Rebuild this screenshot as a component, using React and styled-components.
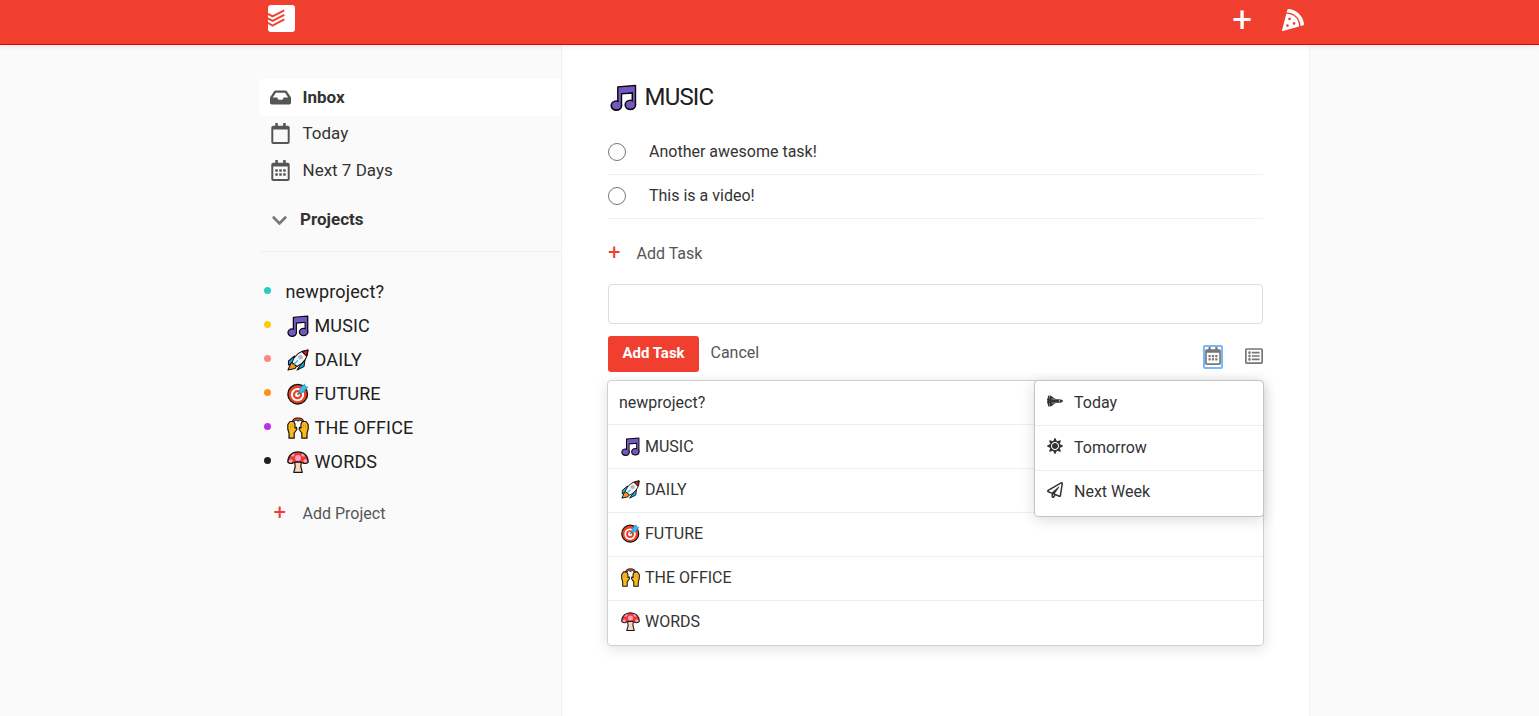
import React from 'react';
import styled, { createGlobalStyle, css } from 'styled-components';
import {
  FaPizzaSlice,
  FaInbox,
  FaRegCalendar,
  FaRegCalendarAlt,
  FaChevronDown,
  FaRegListAlt,
  FaSpaceShuttle,
  FaSun,
  FaRegPaperPlane,
} from 'react-icons/fa';

const GlobalStyle = createGlobalStyle`
  *, *::before, *::after { box-sizing: border-box; }
  body {
    margin: 0;
    background: #fafafa;
    color: #333;
    font-family: Roboto, "Liberation Sans", sans-serif;
    font-size: 16px;
    overflow: hidden;
  }
  ul { list-style: none; margin: 0; padding: 0; }
  button { font: inherit; border: 0; background: none; padding: 0; cursor: pointer; }
`;

const Header = styled.header`
  position: relative;
  height: 45px;
  background: #f03f2f;
  border-bottom: 1px solid #e60000;
  box-shadow: 0 2px 5px rgba(0, 0, 0, 0.07);
  z-index: 1;
`;

const HeaderInner = styled.nav`
  display: flex;
  justify-content: space-between;
  width: 1051px;
  height: 44px;
  margin-left: 259px;
  padding: 5px 6px 0 9px;
`;

const HeaderActions = styled.div`
  display: flex;
  align-items: center;
  height: 30px;
  gap: 30px;
  color: #fff;
`;

const Columns = styled.div`
  display: flex;
  height: 671px;
  padding-left: 259px;
`;

const Sidebar = styled.aside`
  width: 302px;
  padding-top: 34px;
`;

const NavItem = styled.li`
  display: flex;
  align-items: center;
  height: 36.6px;
  padding-left: 11px;
  gap: 11.5px;
  color: #333;
  font-size: 17px;
  font-weight: ${(p) => (p.$active ? 700 : 400)};
  background: ${(p) => (p.$active ? '#fff' : 'transparent')};
  svg { color: #555; flex: none; }
  &:nth-child(2) span { margin-top: -1.4px; }
`;

const ProjectsToggle = styled.div`
  display: flex;
  align-items: center;
  height: 63px;
  padding-left: 12px;
  gap: 12px;
  font-size: 17px;
  font-weight: 700;
  border-bottom: 1px solid #f0f0f0;
  span { margin-top: -2px; }
  svg { color: #777; position: relative; top: 1px; }
`;

const ProjectList = styled.ul`
  padding-top: 23px;
`;

const ProjectItem = styled.li`
  display: flex;
  align-items: center;
  height: 34px;
  padding-left: 5px;
  font-size: 18px;
  letter-spacing: 0.15px;
  color: #202020;
`;

const Dot = styled.span`
  width: 7px;
  height: 7px;
  margin: 0 14.5px 2px 0;
  border-radius: 50%;
  background: ${(p) => p.$color};
`;

const Label = styled.span`
  display: inline-flex;
  align-items: center;
  gap: ${(p) => p.$gap || 5}px;
`;

const AddRow = styled.div`
  display: flex;
  align-items: center;
  height: 24px;
  color: #555;
`;

const AddProject = styled(AddRow)`
  margin-top: 23px;
  padding-left: 14.5px;
`;

const Plus = styled.span`
  width: ${(p) => p.$width}px;
  color: #f03f2f;
  font-size: 22px;
  font-weight: 400;
  line-height: 22px;
  margin-top: -1px;
`;

const Content = styled.main`
  width: 749px;
  padding: 33px 46px 0;
  background: #fff;
  border: solid #f1f1f1;
  border-width: 0 1px;
`;

const Title = styled.h2`
  display: flex;
  align-items: center;
  height: 38px;
  margin: 0 0 15px;
  padding-left: 2px;
  font-size: 24px;
  font-weight: 400;
  letter-spacing: -0.8px;
  color: #202020;
`;

const Task = styled.li`
  display: flex;
  align-items: center;
  height: 44px;
  gap: 23px;
  border-bottom: 1px solid #f0f0f0;
  span { margin-top: -2px; }
`;

const Checkbox = styled.i`
  width: 18px;
  height: 18px;
  margin-top: -1px;
  border: 1px solid #777;
  border-radius: 50%;
`;

const AddTask = styled(AddRow)`
  margin: 22px 0 19px;
`;

const TaskInput = styled.input`
  display: block;
  width: 100%;
  height: 40px;
  padding: 10px;
  border: 1px solid #ddd;
  border-radius: 4px;
  font: inherit;
`;

const FormActions = styled.div`
  display: flex;
  align-items: center;
  height: 36px;
  margin: 12px 0 8px;
`;

const Submit = styled.button`
  width: 91px;
  height: 36px;
  padding-bottom: 2px;
  border-radius: 3px;
  background: #f03f2f;
  color: #fff;
  font-size: 15px;
  font-weight: 700;
`;

const Cancel = styled.span`
  flex: 1;
  margin: -3px 0 0 11.5px;
  color: #555;
`;

const IconButton = styled.button`
  display: flex;
  justify-content: center;
  align-items: center;
  width: 18px;
  height: 20px;
  margin: 4px 0 0 22px;
  color: #777;
  ${(p) => p.$focused && css`
    height: 22px;
    margin: 6px 1px 0 22px;
    padding-bottom: 2px;
    outline: 2px solid #75b9fb;
    outline-offset: -1px;
    border-radius: 1px;
  `}
`;

const panel = css`
  background: #fff;
  border: 1px solid #d0d0d0;
  border-radius: 4px;
`;

const Menus = styled.div`
  position: relative;
  margin: 0 -1px;
`;

const ProjectMenu = styled.ul`
  ${panel}
  box-shadow: 0 3px 14px rgba(0, 0, 0, 0.12);
`;

const DateMenu = styled.ul`
  ${panel}
  position: absolute;
  top: 0;
  right: 0;
  width: 230px;
  height: 137px;
  border-color: #c4c4c4;
  box-shadow: 0 3px 14px rgba(0, 0, 0, 0.14);
`;

const ProjectOption = styled.li`
  display: flex;
  align-items: center;
  height: 44px;
  padding: 0 11px;
  border-bottom: ${(p) => (p.$last ? 0 : 1)}px solid #eee;
  &:nth-child(n + 3) { padding-bottom: 2px; }
  &:last-child { padding-bottom: 3px; }
`;

const DateOption = styled.li`
  display: flex;
  align-items: center;
  height: 45px;
  padding: 0 12px ${(p) => (p.$last ? 4 : 1)}px;
  gap: 11px;
  color: #333;
  border-bottom: ${(p) => (p.$last ? 0 : 1)}px solid #eee;
  svg { margin-top: -3px; }
`;

const EmojiSvg = styled.svg`
  flex: none;
  display: block;
`;

const emojiArt = {
  music: (
    <g stroke="#0a0a0a" strokeWidth="1.3" strokeLinejoin="round">
      <path d="M6.4 2.4 20.7 1.2V17h-2.5V7.2L9.3 8v10H6.4Z" fill="#7457c2" />
      <ellipse cx="5.2" cy="17.6" rx="4.2" ry="3.7" fill="#7457c2" />
      <ellipse cx="16.6" cy="17" rx="4.2" ry="3.7" fill="#7457c2" />
      <path d="M7.1 3.1 20 2V6.4L7.1 7.4Z M7.1 7h1.6v10H7.1Z M18.8 6h1.2v11h-1.2Z" fill="#7457c2" stroke="none" />
    </g>
  ),
  rocket: (
    <g stroke="#151515" strokeWidth="1.1" strokeLinejoin="round">
      <path d="M7.5 7 1.5 12v4l6-3Z M15 14l-5 7 7-3.5 1-7Z" fill="#16aee8" />
      <path d="m4 14-3 7 7-1.5 2-3-4-3Z" fill="#f7941d" />
      <path d="M5 13.5C7 7 12 2 21 1c0 8-5 13.5-11 16.5Z" fill="#f5f6f7" />
      <path d="M15 2.7 21 1l-1.5 6.2Z" fill="#e81224" />
      <circle cx="13.5" cy="8.2" r="1.8" fill="#bcc3ca" stroke="#999" strokeWidth=".8" />
      <path d="m6.9 15.3 4-4" stroke="#31bdef" strokeWidth="1.3" />
    </g>
  ),
  target: (
    <g>
      <circle cx="10.7" cy="11.2" r="9.8" fill="#ee3f23" stroke="#111" strokeWidth="1.4" />
      <circle cx="10.5" cy="11.7" r="6.6" fill="#fff" />
      <circle cx="10.5" cy="11.7" r="4.6" fill="#ee3f23" />
      <circle cx="10.5" cy="11.7" r="2.4" fill="#fff" />
      <path d="m10.5 11.7 5-5" stroke="#08709e" strokeWidth="1.4" />
      <path d="m12.5 9.8.3-4.1L17.5 1l.9 2.3 2.4.9-4.7 5Z" fill="#35bcef" stroke="#1995c9" strokeWidth=".7" />
    </g>
  ),
  hands: (
    <g stroke="#161616" strokeWidth="1.2" strokeLinejoin="round">
      <path d="M2 21.2v-5L.8 12V7.5L3 4.5h3.7L8 7v4l1.5-.7.3 2.2L7.2 16v5.2Z" fill="#fbb91d" />
      <path d="M20 21.2v-5l1.2-4.2V7.5L19 4.5h-3.7L14 7v4l-1.5-.7-.3 2.2 2.6 3.5v5.2Z" fill="#fbb91d" />
      <path d="M3.5 7v4.5m2-4.5v4m13-4v4.5m-2-4.5v4" fill="none" stroke="#d99419" strokeWidth=".6" />
      <path d="M5.2 4.7 6.5 2 9 1h4l2.5 1 1.3 2.7-2.5-.8L13 2.8l-2 1.4-2-1.4-1.3 1.1Z" fill="#f04b23" strokeWidth="1" />
    </g>
  ),
  mushroom: (
    <g stroke="#151515" strokeWidth="1.2" strokeLinejoin="round">
      <path d="M7.7 11h6.6l-.5 4.5 1.5 5.8H6.7L8.2 16Z" fill="#f8d5bd" />
      <path d="M.8 11C.7 5 5 .9 11 .9S21.3 5 21.2 11c-1.6 1.9-4.4 1.7-5.6.7-2.5-1-6.7-1-9.2 0-1.2 1-4 1.2-5.6-.7Z" fill="#f03a23" />
      <g fill="#f7a1cd" stroke="none">
        <circle cx="11" cy="7" r="2.9" />
        <path d="M1.7 10.8c0-3 3.4-3.4 4-.5-.6 1.6-2.9 1.9-4 .5ZM20.3 10.8c0-3-3.4-3.4-4-.5.6 1.6 2.9 1.9 4 .5ZM3.5 5.2l3-2.8c2 .3.8 3-.8 3.2ZM18.5 5.2l-3-2.8c-2 .3-.8 3 .8 3.2Z" />
      </g>
    </g>
  ),
};

function Emoji({ name, size }) {
  return (
    <EmojiSvg width={size} height={size} viewBox="0 0 22 22">
      {emojiArt[name]}
    </EmojiSvg>
  );
}

function Logo() {
  return (
    <svg width="27" height="27" viewBox="0 0 27 27">
      <rect width="27" height="27" rx="3" fill="#fff" />
      <g fill="none" stroke="#f03f2f" strokeWidth="1.9">
        <path d="m0 8.8 4.5 2.5L16.3 5.3" />
        <path d="m0 13.3 4.5 2.6 11.8-6.1" />
        <path d="m0 17.9 4.5 2.8 11.8-6.3" />
      </g>
    </svg>
  );
}

const projects = [
  { name: 'newproject?', color: '#25d0c0' },
  { name: 'MUSIC', color: '#ffcc00', emoji: 'music' },
  { name: 'DAILY', color: '#ff8581', emoji: 'rocket' },
  { name: 'FUTURE', color: '#ff9319', emoji: 'target' },
  { name: 'THE OFFICE', color: '#bd2ee9', emoji: 'hands' },
  { name: 'WORDS', color: '#202020', emoji: 'mushroom' },
];

const EmojiSlot = styled.span`
  padding: ${(p) => p.$pad || '0 0 0 1px'};
`;

function ProjectLabel({ project, size, pad, gap }) {
  return (
    <Label $gap={gap}>
      {project.emoji && (
        <EmojiSlot $pad={pad}>
          <Emoji name={project.emoji} size={size} />
        </EmojiSlot>
      )}
      <span>{project.name}</span>
    </Label>
  );
}

const HeaderPlus = styled.span`
  font-size: 35px;
  font-weight: 400;
  line-height: 32px;
`;

export default function App() {
  return (
    <>
      <GlobalStyle />
      <Header>
        <HeaderInner>
          <Logo />
          <HeaderActions>
            <HeaderPlus>+</HeaderPlus>
            <FaPizzaSlice size={22} />
          </HeaderActions>
        </HeaderInner>
      </Header>
      <Columns>
        <Sidebar>
          <ul>
            <NavItem $active><FaInbox size={21} /><span>Inbox</span></NavItem>
            <NavItem><FaRegCalendar size={21} /><span>Today</span></NavItem>
            <NavItem><FaRegCalendarAlt size={21} /><span>Next 7 Days</span></NavItem>
          </ul>
          <ProjectsToggle><FaChevronDown size={17} /><span>Projects</span></ProjectsToggle>
          <ProjectList>
            {projects.map((p) => (
              <ProjectItem key={p.name}>
                <Dot $color={p.color} />
                <ProjectLabel project={p} size={22} gap={6} />
              </ProjectItem>
            ))}
          </ProjectList>
          <AddProject><Plus $width={29}>+</Plus><span>Add Project</span></AddProject>
        </Sidebar>
        <Content>
          <Title><Label $gap={7.5}><Emoji name="music" size={27} /><span>MUSIC</span></Label></Title>
          <ul>
            <Task><Checkbox /><span>Another awesome task!</span></Task>
            <Task><Checkbox /><span>This is a video!</span></Task>
          </ul>
          <AddTask><Plus $width={28.5}>+</Plus><span>Add Task</span></AddTask>
          <TaskInput />
          <FormActions>
            <Submit>Add Task</Submit>
            <Cancel>Cancel</Cancel>
            <IconButton $focused><FaRegCalendarAlt size={18} /></IconButton>
            <IconButton><FaRegListAlt size={18} /></IconButton>
          </FormActions>
          <Menus>
            <ProjectMenu>
              {projects.map((p, i) => (
                <ProjectOption key={p.name} $last={i === projects.length - 1}>
                  <ProjectLabel project={p} size={19} gap={5.5} pad="0 0 0 1.5px" />
                </ProjectOption>
              ))}
            </ProjectMenu>
            <DateMenu>
              <DateOption><FaSpaceShuttle size={16} /><span>Today</span></DateOption>
              <DateOption><FaSun size={16} /><span>Tomorrow</span></DateOption>
              <DateOption $last><FaRegPaperPlane size={16} /><span>Next Week</span></DateOption>
            </DateMenu>
          </Menus>
        </Content>
      </Columns>
    </>
  );
}
